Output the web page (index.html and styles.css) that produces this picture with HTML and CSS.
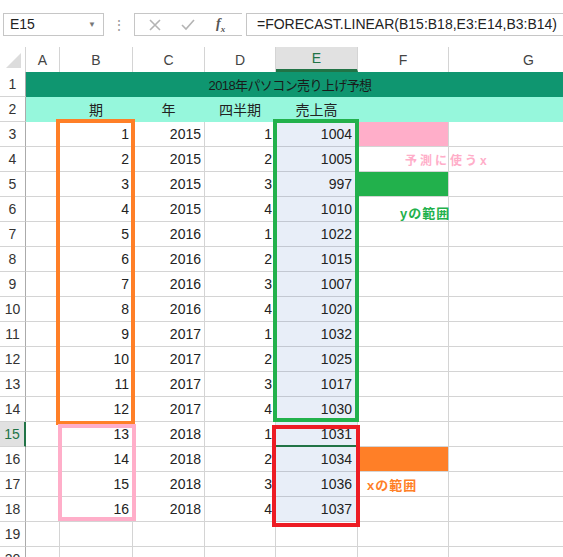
FILE: index.html
```html
<!DOCTYPE html>
<html lang="ja">
<head>
    <meta charset="UTF-8">
    <title>2018年パソコン売り上げ予想</title>
    <link rel="stylesheet" href="styles.css">
</head>
<body>
    <div class="toolbar">
        <div class="name-box">E15<span class="drop">&#9660;</span></div>
        <div class="dots">&#8942;</div>
        <div class="fx-group">
            <svg class="tb-icon" width="14" height="14" viewBox="0 0 14 14"><path d="M2 2L12 12M12 2L2 12" stroke="#b4b4b4" stroke-width="1.6" fill="none"/></svg>
            <svg class="tb-icon" width="16" height="14" viewBox="0 0 16 14"><path d="M2 7L6 11L14 2" stroke="#b4b4b4" stroke-width="1.6" fill="none"/></svg>
            <span class="fx">f<sub>x</sub></span>
        </div>
        <div class="formula">=FORECAST.LINEAR(B15:B18,E3:E14,B3:B14)</div>
    </div>

    <div class="sheet">
        <table class="grid">
            <colgroup>
                <col class="c-rh"><col class="c-a"><col class="c-b"><col class="c-c"><col class="c-d"><col class="c-e"><col class="c-f"><col class="c-g">
            </colgroup>
            <tr class="head">
                <th class="corner"><span class="tri"></span></th>
                <th>A</th><th>B</th><th>C</th><th>D</th><th class="sel">E</th><th>F</th><th>G</th>
            </tr>
            <tr>
                <th class="rh">1</th>
                <td colspan="7" class="title">2018年パソコン売り上げ予想</td>
            </tr>
            <tr class="labels">
                <th class="rh">2</th>
                <td></td><td>期</td><td>年</td><td>四半期</td><td>売上高</td><td></td><td></td>
            </tr>
            <tr><th class="rh">3</th><td></td><td class="n">1</td><td class="n">2015</td><td class="n">1</td><td class="n e">1004</td><td class="fill-pink"></td><td></td></tr>
            <tr><th class="rh">4</th><td></td><td class="n">2</td><td class="n">2015</td><td class="n">2</td><td class="n e">1005</td><td class="note"><span class="note-pink">予測に使うx</span></td><td></td></tr>
            <tr><th class="rh">5</th><td></td><td class="n">3</td><td class="n">2015</td><td class="n">3</td><td class="n e">997</td><td class="fill-green"></td><td></td></tr>
            <tr><th class="rh">6</th><td></td><td class="n">4</td><td class="n">2015</td><td class="n">4</td><td class="n e">1010</td><td class="note"><span class="note-green">yの範囲</span></td><td></td></tr>
            <tr><th class="rh">7</th><td></td><td class="n">5</td><td class="n">2016</td><td class="n">1</td><td class="n e">1022</td><td></td><td></td></tr>
            <tr><th class="rh">8</th><td></td><td class="n">6</td><td class="n">2016</td><td class="n">2</td><td class="n e">1015</td><td></td><td></td></tr>
            <tr><th class="rh">9</th><td></td><td class="n">7</td><td class="n">2016</td><td class="n">3</td><td class="n e">1007</td><td></td><td></td></tr>
            <tr><th class="rh">10</th><td></td><td class="n">8</td><td class="n">2016</td><td class="n">4</td><td class="n e">1020</td><td></td><td></td></tr>
            <tr><th class="rh">11</th><td></td><td class="n">9</td><td class="n">2017</td><td class="n">1</td><td class="n e">1032</td><td></td><td></td></tr>
            <tr><th class="rh">12</th><td></td><td class="n">10</td><td class="n">2017</td><td class="n">2</td><td class="n e">1025</td><td></td><td></td></tr>
            <tr><th class="rh">13</th><td></td><td class="n">11</td><td class="n">2017</td><td class="n">3</td><td class="n e">1017</td><td></td><td></td></tr>
            <tr><th class="rh">14</th><td></td><td class="n">12</td><td class="n">2017</td><td class="n">4</td><td class="n e">1030</td><td></td><td></td></tr>
            <tr><th class="rh rh-sel">15</th><td></td><td class="n">13</td><td class="n">2018</td><td class="n">1</td><td class="n e active">1031</td><td></td><td></td></tr>
            <tr><th class="rh">16</th><td></td><td class="n">14</td><td class="n">2018</td><td class="n">2</td><td class="n e">1034</td><td class="fill-orange"></td><td></td></tr>
            <tr><th class="rh">17</th><td></td><td class="n">15</td><td class="n">2018</td><td class="n">3</td><td class="n e">1036</td><td class="note"><span class="note-orange">xの範囲</span></td><td></td></tr>
            <tr><th class="rh">18</th><td></td><td class="n">16</td><td class="n">2018</td><td class="n">4</td><td class="n e">1037</td><td></td><td></td></tr>
            <tr><th class="rh">19</th><td></td><td></td><td></td><td></td><td></td><td></td><td></td></tr>
            <tr><th class="rh">20</th><td></td><td></td><td></td><td></td><td></td><td></td><td></td></tr>
        </table>

        <!-- rectangles drawn over the sheet -->
        <div class="box box-orange"></div>
        <div class="box box-pink"></div>
        <div class="box box-green"></div>
        <div class="box box-red"></div>
    </div>
</body>
</html>
```

FILE: styles.css
```css
body {
    margin: 0;
    background: #fff;
    font-family: "Liberation Sans", "Noto Sans CJK JP", sans-serif;
    color: #222;
    overflow: hidden;
    width: 563px;
    height: 557px;
}

/* formula bar */
.toolbar {
    display: flex;
    align-items: center;
    height: 23px;
    margin-top: 13px;
    margin-bottom: 11px;
}
.name-box {
    position: relative;
    width: 93px;
    height: 21px;
    margin-left: 3px;
    padding-left: 6px;
    border: 1px solid #c6c6c6;
    font-size: 14px;
    line-height: 21px;
    color: #222;
}
.drop {
    position: absolute;
    right: 7px;
    top: 0;
    font-size: 8px;
    color: #777;
}
.dots {
    width: 30px;
    text-align: center;
    color: #9a9a9a;
    font-size: 14px;
}
.fx-group {
    display: flex;
    align-items: center;
    width: 107px;
    height: 21px;
    border: 1px solid #c6c6c6;
    border-right: none;
}
.tb-icon {
    margin-left: 13px;
    margin-right: 5px;
}
.fx {
    margin-left: 15px;
    font-family: "Liberation Serif", serif;
    font-style: italic;
    font-weight: bold;
    font-size: 14px;
    color: #555;
}
.fx sub {
    font-size: 9px;
}
.formula {
    flex: 1;
    height: 21px;
    margin-left: 4px;
    padding-left: 10px;
    border: 1px solid #c6c6c6;
    border-right: none;
    font-size: 14px;
    line-height: 21px;
    white-space: nowrap;
}

/* sheet */
.sheet {
    position: relative;
}
.grid {
    table-layout: fixed;
    border-collapse: separate;
    border-spacing: 0;
    width: 609px;
    font-size: 14px;
}
.c-rh { width: 26px; }
.c-a { width: 34px; }
.c-b { width: 73px; }
.c-c { width: 72px; }
.c-d { width: 71px; }
.c-e { width: 82px; }
.c-f { width: 91px; }
.c-g { width: 160px; }

.grid tr { height: 25px; }
.grid td {
    padding: 0 3px 0 0;
    border-right: 1px solid #d4d4d4;
    border-bottom: 1px solid #d4d4d4;
    white-space: nowrap;
    overflow: visible;
}
.grid th {
    font-weight: normal;
    color: #444;
    padding: 0;
}

.head { height: 24px; }
.head th {
    border-right: 1px solid #d4d4d4;
    font-size: 14px;
}
.corner {
    position: relative;
}
.tri {
    position: absolute;
    right: 4px;
    bottom: 4px;
    width: 0;
    height: 0;
    border-left: 15px solid transparent;
    border-bottom: 15px solid #dcdcdc;
}
.head th.sel {
    background: #e1e1e1;
    color: #217346;
    border-bottom: 3px solid #217346;
}

.rh {
    border-right: 1px solid #ababab;
    border-bottom: 1px solid #d4d4d4;
    text-align: center;
    font-size: 14px;
}
.grid th.rh { color: #333; }
.grid th.rh-sel {
    background: #e1e1e1;
    color: #217346;
    border-right: 2px solid #217346;
}

.grid td.title {
    background: #0f9670;
    border-color: #0f9670;
    text-align: center;
    padding-right: 54px;
    font-size: 13px;
    letter-spacing: -0.6px;
    color: #1a1a1a;
}
.labels td {
    background: #96f7dc;
    border-color: #96f7dc;
    text-align: center;
    padding: 0;
    font-size: 14px;
}

.n { text-align: right; }
.grid td.e {
    background: #e8eef8;
    border-bottom-color: #c3c8d2;
    padding-right: 5px;
}
.grid td.active {
    border-bottom: 2px solid #217346;
}

.fill-pink { background: #ffaec9; }
.fill-green { background: #22b14c; }
.fill-orange { background: #ff7f27; }

.note {
    position: relative;
    font-weight: bold;
}
.note span {
    position: absolute;
    top: 0;
    bottom: 0;
    display: flex;
    align-items: center;
    font-size: 12px;
}
.note-pink {
    left: 47px;
    color: #ffaec9;
    letter-spacing: 3px;
}
.note-green {
    left: 42px;
    color: #22b14c;
    padding-top: 6px;
    font-size: 13px !important;
    letter-spacing: 1px;
}
.note-orange {
    left: 9px;
    color: #ff7f27;
    font-size: 13px !important;
    letter-spacing: 1px;
}

/* annotation rectangles */
.box {
    position: absolute;
    border: 4px solid;
}
.box-orange {
    left: 56px;
    top: 72px;
    width: 71px;
    height: 298px;
    border-color: #ff7f27;
}
.box-pink {
    left: 58px;
    top: 377px;
    width: 70px;
    height: 89px;
    border-color: #ffaec9;
}
.box-green {
    left: 273px;
    top: 72px;
    width: 78px;
    height: 295px;
    border-color: #22b14c;
}
.box-red {
    left: 272px;
    top: 378px;
    width: 80px;
    height: 94px;
    border-color: #ed1c24;
}
```
